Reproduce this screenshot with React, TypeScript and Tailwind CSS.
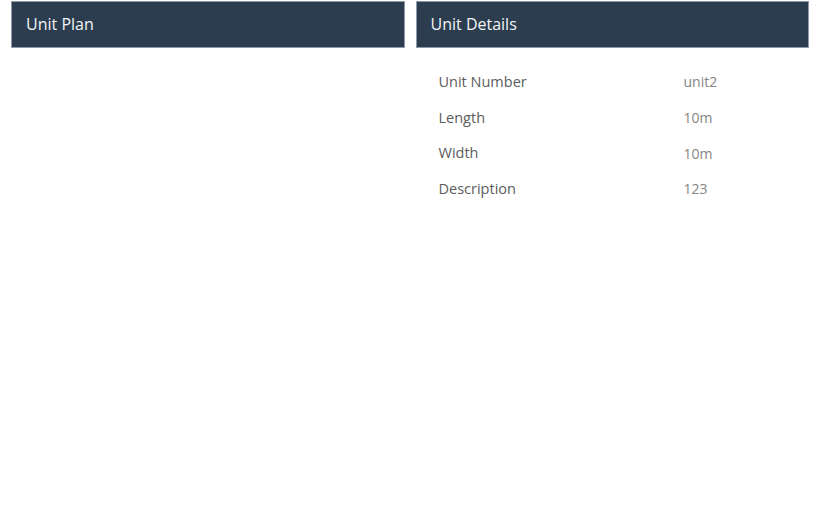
const details = [
  { label: 'Unit Number', value: 'unit2' },
  { label: 'Length', value: '10m' },
  { label: 'Width', value: '10m' },
  { label: 'Description', value: '123' },
]

function PanelHeader({ title }: { title: string }) {
  return (
    <div className="h-[47px] bg-[#2d3d50] border border-[#8f9aa6] flex items-center px-[14px] pb-[2px]">
      <h2 className="text-[16px] text-[#f2f4f6] font-medium">{title}</h2>
    </div>
  )
}

export default function App() {
  return (
    <div
      className="w-[820px] h-[528px] bg-white pt-px px-[11px]"
      style={{ fontFamily: '"Open Sans", Arial, sans-serif' }}
    >
      <div className="grid grid-cols-2 gap-[11px]">
        <section>
          <PanelHeader title="Unit Plan" />
        </section>
        <section>
          <PanelHeader title="Unit Details" />
          <table className="mt-[16px] ml-[23px]">
            <tbody>
              {details.map((row) => (
                <tr key={row.label} className="h-[35.7px]">
                  <td className="w-[245px] text-[14.5px] text-[#5c5c5c]">{row.label}</td>
                  <td className="text-[14px] text-[#858585]">{row.value}</td>
                </tr>
              ))}
            </tbody>
          </table>
        </section>
      </div>
    </div>
  )
}
